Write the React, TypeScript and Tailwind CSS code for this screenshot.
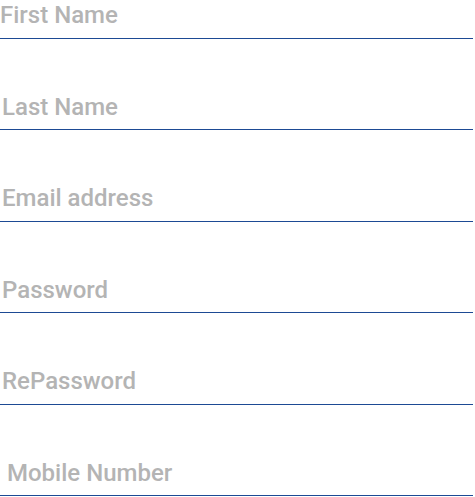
const fields = [
  { name: 'firstName', label: 'First Name', type: 'text', pad: 'pl-0' },
  { name: 'lastName', label: 'Last Name', type: 'text', pad: 'pl-[2px]' },
  { name: 'email', label: 'Email address', type: 'email', pad: 'pl-[2px]' },
  { name: 'password', label: 'Password', type: 'password', pad: 'pl-[2px]' },
  { name: 'rePassword', label: 'RePassword', type: 'password', pad: 'pl-[2px]' },
  { name: 'mobile', label: 'Mobile Number', type: 'tel', pad: 'pl-[7px]' },
];

export default function App() {
  return (
    <div className="w-[475px] h-[497px] bg-white font-['Roboto',sans-serif]">
      <form className="flex flex-col gap-[53px]">
        {fields.map((f) => (
          <input
            key={f.name}
            name={f.name}
            type={f.type}
            placeholder={f.label}
            className={`block w-[473px] h-[38.5px] pb-[7px] border-b-[1.5px] border-[#1d4a94] bg-transparent text-[24px] font-medium text-gray-700 outline-none placeholder:text-[#b4b4b4] ${f.pad}`}
          />
        ))}
      </form>
    </div>
  );
}
